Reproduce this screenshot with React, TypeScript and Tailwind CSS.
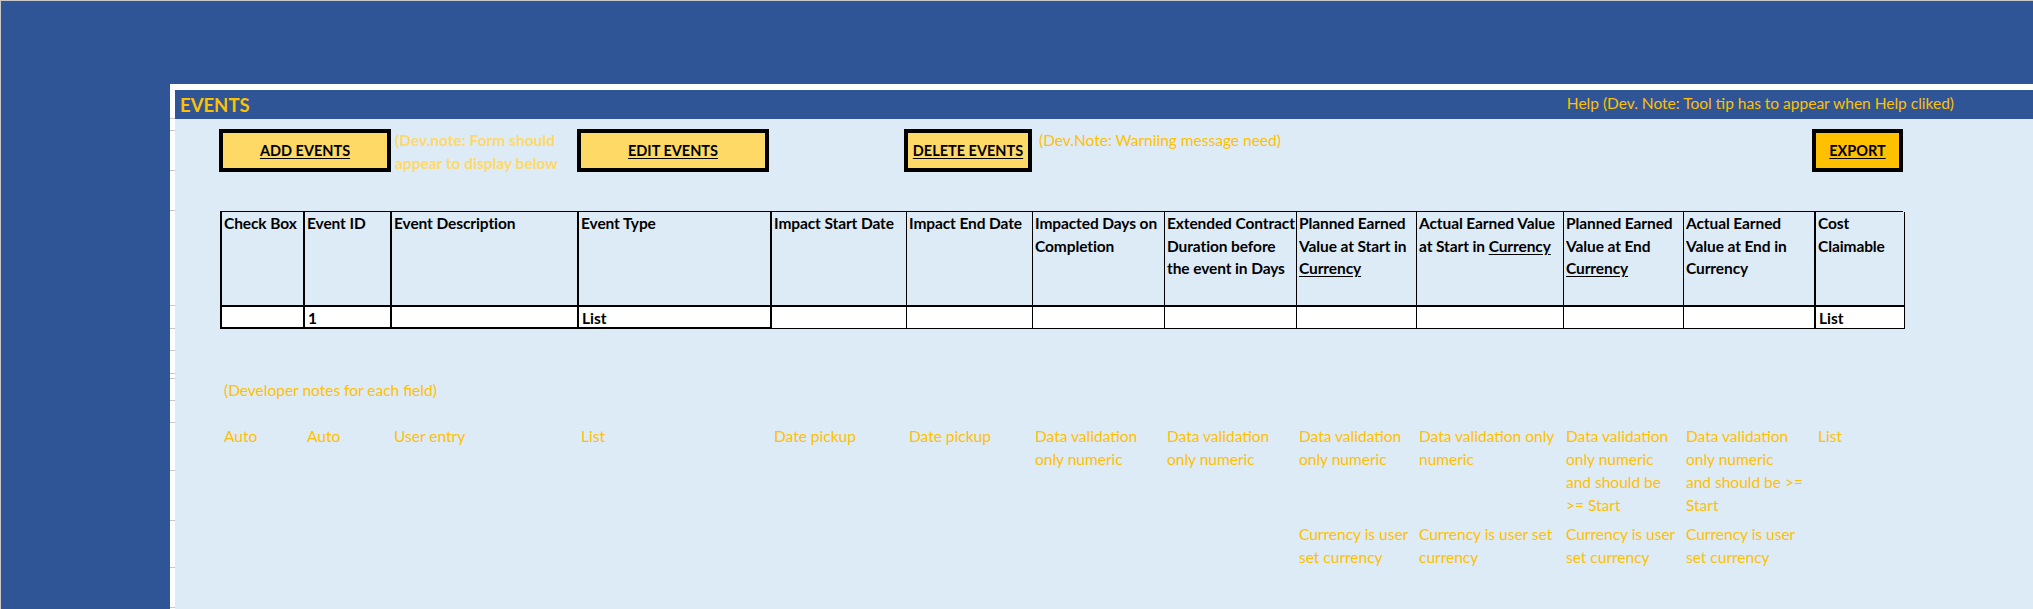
import React from 'react';

// shared column grid (widths include the right border of each cell)
const COLS =
  'grid grid-cols-[83px_87px_187px_193px_135px_126px_132px_132px_120px_147px_120px_132px_89px]';

// spreadsheet row heights on the left white strip (each ends with a grey tick)
const ROW_TICKS = [29, 12, 40, 40, 95, 23, 22, 23, 5, 22, 22, 48, 50, 47, 40];

const headers: React.ReactNode[][] = [
  ['Check Box'],
  ['Event ID'],
  ['Event Description'],
  ['Event Type'],
  ['Impact Start Date'],
  ['Impact End Date'],
  ['Impacted Days on', 'Completion'],
  ['Extended Contract', 'Duration before', 'the event in Days'],
  ['Planned Earned', 'Value at Start in', <span className="underline underline-offset-2">Currency</span>],
  ['Actual Earned Value', <>at Start in <span className="underline underline-offset-2">Currency</span></>],
  ['Planned Earned', 'Value at End', <span className="underline underline-offset-2">Currency</span>],
  ['Actual Earned', 'Value at End in', 'Currency'],
  ['Cost', 'Claimable'],
];

const dataRow = ['', '1', '', 'List', '', '', '', '', '', '', '', '', 'List'];

const thick = [true, true, true, true, false, false, false, false, false, false, false, true, false];

const notes1 = [
  ['Auto'],
  ['Auto'],
  ['User entry'],
  ['List'],
  ['Date pickup'],
  ['Date pickup'],
  ['Data validation', 'only numeric'],
  ['Data validation', 'only numeric'],
  ['Data validation', 'only numeric'],
  ['Data validation only', 'numeric'],
  ['Data validation', 'only numeric'],
  ['Data validation', 'only numeric'],
  ['List'],
];

const notes2 = [[], [], [], [], [], [], [], [], [], [], ['and should be', '>= Start'], ['and should be >=', 'Start'], []];

const notes3 = [
  [], [], [], [], [], [], [], [],
  ['Currency is user', 'set currency'],
  ['Currency is user set', 'currency'],
  ['Currency is user', 'set currency'],
  ['Currency is user', 'set currency'],
  [],
];

const Button = ({ label, className }: { label: string; className: string }) => (
  <div
    className={`h-[43px] border-4 border-black flex items-center justify-center text-[14.5px] font-bold text-black underline underline-offset-2 ${className}`}
  >
    {label}
  </div>
);

const NoteRow = ({ cells, height }: { cells: string[][]; height: string }) => (
  <div className={`${COLS} ${height}`}>
    {cells.map((lines, i) => (
      <div key={i} className="pl-[4px] pt-[2px] leading-[22.5px] whitespace-nowrap text-[#FFC000]">
        {lines.map((l, j) => (
          <div key={j}>{l}</div>
        ))}
      </div>
    ))}
  </div>
);

const App = () => {
  return (
    <div className="w-[2033px] h-[609px] overflow-hidden bg-[#2F5597] border-l border-t border-[#c8c8c8] font-[Lato,sans-serif] text-[15.5px]">
      <div className="pt-[83px] pl-[169px] h-full">
        <div className="h-full border-t-[6px] border-white flex">
          {/* left white strip with row ticks */}
          <div className="w-[5px] bg-white flex flex-col shrink-0">
            {ROW_TICKS.map((h, i) => (
              <div key={i} className="border-b border-[#c8c8c8]" style={{ height: h }} />
            ))}
          </div>

          <div className="flex-1 bg-[#DDEBF7] flex flex-col">
            {/* title bar */}
            <div className="h-[29px] bg-[#2F5597] flex items-center justify-between pl-[5px] pr-[79px]">
              <span className="text-[18.5px] font-bold text-[#FFC000] pt-[2px]">EVENTS</span>
              <span className="text-[#FFC000] pb-[2px]">Help (Dev. Note: Tool tip has to appear when Help cliked)</span>
            </div>

            <div className="pl-[45px]">
              {/* action buttons */}
              <div className={`${COLS} mt-[10px] h-[43px]`}>
                <Button label="ADD EVENTS" className="col-start-1 col-span-2 w-[172px] -ml-px bg-[#FFD966]" />
                <div className="col-start-3 pl-[5px] leading-[23px] font-bold text-[#FFD966] whitespace-nowrap">
                  <div>(Dev.note: Form should</div>
                  <div>appear to display below</div>
                </div>
                <Button label="EDIT EVENTS" className="col-start-4 w-[192px] bg-[#FFD966]" />
                <Button label="DELETE EVENTS" className="col-start-6 w-[128px] -ml-px bg-[#FFD966]" />
                <div className="col-start-7 col-span-3 pl-[8px] leading-[23px] text-[#FFC000] whitespace-nowrap">
                  (Dev.Note: Warniing message need)
                </div>
                <Button label="EXPORT" className="col-start-13 w-[91px] -ml-[2px] bg-[#FFC000]" />
              </div>

              {/* events table */}
              <div className="mt-[39px] w-[1683px] border-l-2 border-t border-black">
                <div className={`${COLS} h-[95px]`}>
                  {headers.map((lines, i) => (
                    <div
                      key={i}
                      className={`${thick[i] ? 'border-r-2' : 'border-r'} border-b-2 border-black pl-[2px] pt-0 font-bold text-black leading-[22.5px] whitespace-nowrap tracking-[-0.1px]`}
                    >
                      {lines.map((l, j) => (
                        <div key={j}>{l}</div>
                      ))}
                    </div>
                  ))}
                </div>
                <div className={`${COLS} h-[22px]`}>
                  {dataRow.map((v, i) => (
                    <div
                      key={i}
                      className={`${thick[i] ? 'border-r-2' : 'border-r'} ${i < 4 ? 'border-b-2' : 'border-b'} border-black bg-white pl-[3px] pt-[2px] font-bold text-black leading-[18px]`}
                    >
                      {v}
                    </div>
                  ))}
                </div>
              </div>

              {/* developer notes */}
              <div className="mt-[50px] h-[22px] pl-[4px] leading-[22px] text-[#FFC000]">(Developer notes for each field)</div>
              <div className="mt-[22px]">
                <NoteRow cells={notes1} height="h-[46px]" />
                <NoteRow cells={notes2} height="h-[52px]" />
                <NoteRow cells={notes3} height="h-[47px]" />
              </div>
            </div>
          </div>
        </div>
      </div>
    </div>
  );
};

export default App;
